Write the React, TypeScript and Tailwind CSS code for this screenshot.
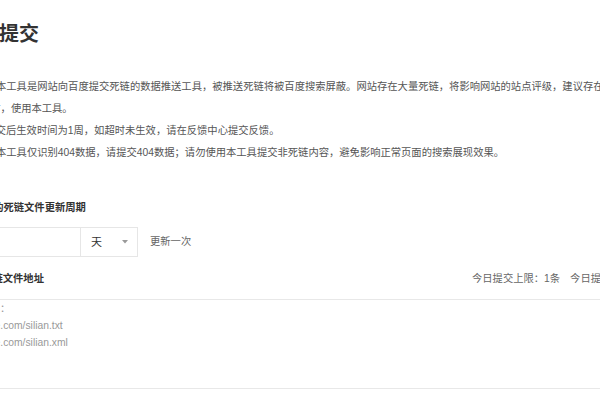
export default function App() {
  return (
    <div className="w-[600px] h-[400px] overflow-hidden bg-white font-['Liberation_Sans','Noto_Sans_CJK_SC',sans-serif] text-[#333]">
      {/* page column, its left part is outside the shot */}
      <div className="-ml-[41px] w-[900px] pt-[20px]">
        <h1 className="text-[20px] leading-[28px] font-bold whitespace-nowrap">死链提交</h1>

        {/* notes */}
        <div className="mt-[28px] text-[10.3px] leading-[22px] text-[#555] whitespace-nowrap">
          <p className="pl-[21px]">
            1、本工具是网站向百度提交死链的数据推送工具，被推送死链将被百度搜索屏蔽。网站存在大量死链，将影响网站的站点评级，建议存在死链时
          </p>
          <p className="pl-[21px]">链时，使用本工具。</p>
          <p className="pl-[10.4px]">2、提交后生效时间为1周，如超时未生效，请在反馈中心提交反馈。</p>
          <p className="pl-[21px]">
            3、本工具仅识别404数据，请提交404数据；请勿使用本工具提交非死链内容，避免影响正常页面的搜索展现效果。
          </p>
        </div>

        {/* update period */}
        <p className="mt-[33px] pl-[3.3px] text-[10.3px] leading-[22px] font-bold whitespace-nowrap">
          设置您的死链文件更新周期
        </p>
        <div className="mt-[8px] flex items-center">
          <div className="flex h-[30px] border border-[#e6e6e6]">
            <div className="w-[120px]" />
            <div className="w-[57px] border-l border-[#e6e6e6] flex items-center justify-between pl-[10px] pr-[9px]">
              <span className="text-[11px] text-[#333]">天</span>
              <svg width="6" height="4" viewBox="0 0 6 4">
                <path d="M0 0h6L3 3.5z" fill="#9a9a9a" />
              </svg>
            </div>
          </div>
          <span className="ml-[12px] text-[10.3px] text-[#666]">更新一次</span>
        </div>

        {/* file address */}
        <div className="mt-[11px] flex items-center text-[10.3px] leading-[22px] whitespace-nowrap">
          <div className="w-[513px] pl-[23.2px] font-bold">死链文件地址</div>
          <div className="text-[#666]">
            今日提交上限：1条<span className="ml-[10px]">今日提交：0条</span>
          </div>
        </div>

        <div className="mt-[9px] h-[90px] w-[860px] border border-[#e8e8e8] text-[10.3px] leading-[17px] text-[#999] whitespace-nowrap">
          <p className="pl-[19.4px]">例如：</p>
          <p className="-ml-[49px]">http://www.example.com/silian.txt</p>
          <p className="-ml-[49px]">http://www.example.com/silian.xml</p>
        </div>
      </div>
    </div>
  );
}
